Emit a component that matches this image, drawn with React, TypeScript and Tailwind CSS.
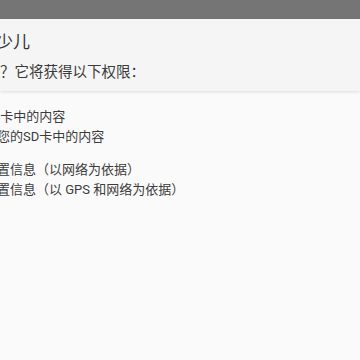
import React from "react";

const cjk = { fontFamily: 'Roboto, "Noto Sans CJK SC", sans-serif' };

export default function App() {
  return (
    <div className="w-[360px] h-[360px] overflow-hidden flex flex-col bg-[#fafafa]" style={cjk}>
      <div className="h-[19px] bg-[#757575] shrink-0" />
      <div className="h-[72px] shrink-0 bg-[#f5f5f5] flex flex-col pt-[13px] shadow-[0_1px_3px_rgba(0,0,0,0.12)] relative z-10">
        <div className="ml-[-38px] whitespace-nowrap text-[17px] leading-[20px] text-[#333333]">口袋少儿</div>
        <div className="ml-[-116px] mt-[11px] whitespace-nowrap text-[14.5px] leading-[20px] text-[#3a3a3a]">
          您要安装此应用吗？它将获得以下权限：
        </div>
      </div>
      <div className="flex flex-col pt-[16px] text-[13px] leading-[20px] text-[#3c3c3c]">
        <div className="flex flex-col">
          <div className="ml-[-42px] whitespace-nowrap">修改SD卡中的内容</div>
          <div className="ml-[-42px] whitespace-nowrap">可读取您的SD卡中的内容</div>
        </div>
        <div className="flex flex-col mt-[13px]">
          <div className="ml-[-42px] whitespace-nowrap">大致位置信息（以网络为依据）</div>
          <div className="ml-[-42px] whitespace-nowrap">精确位置信息（以 GPS 和网络为依据）</div>
        </div>
      </div>
    </div>
  );
}
